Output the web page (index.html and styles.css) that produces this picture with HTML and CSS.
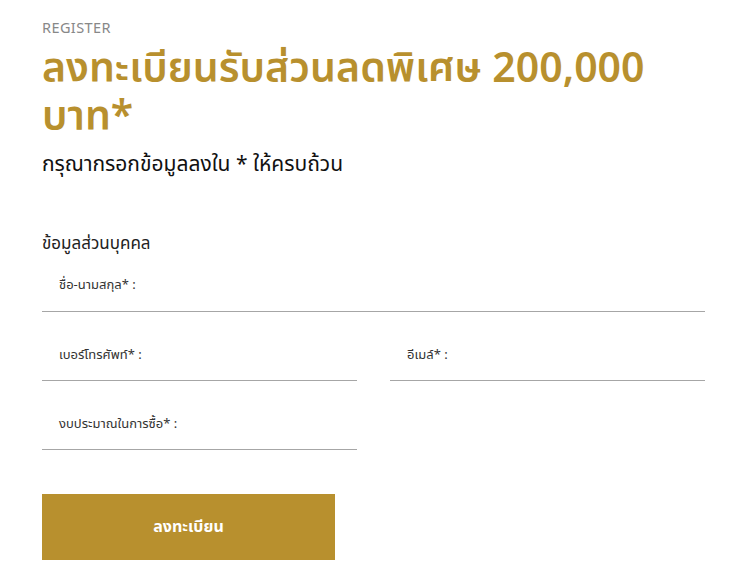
FILE: index.html
```html
<!DOCTYPE html>
<html lang="th">
<head>
<meta charset="utf-8">
<link rel="stylesheet" href="styles.css">
</head>
<body>
<div class="page">
  <div class="eyebrow">REGISTER</div>
  <h1 class="title">ลงทะเบียนรับส่วนลดพิเศษ 200,000 บาท*</h1>
  <p class="subtitle">กรุณากรอกข้อมูลลงใน * ให้ครบถ้วน</p>
  <h2 class="section">ข้อมูลส่วนบุคคล</h2>
  <form class="form">
    <div class="field first"><label>ชื่อ-นามสกุล* :</label></div>
    <div class="row">
      <div class="field"><label>เบอร์โทรศัพท์* :</label></div>
      <div class="field"><label>อีเมล์* :</label></div>
      <div class="field"><label>งบประมาณในการซื้อ* :</label></div>
    </div>
    <button type="button" class="btn">ลงทะเบียน</button>
  </form>
</div>
</body>
</html>
```
FILE: styles.css
```css
* { box-sizing: border-box; }
body {
  margin: 0;
  background: #fff;
  font-family: "Noto Sans", "Noto Sans Thai", "DejaVu Sans", sans-serif;
}
.page {
  padding: 17px 41px 0 42px;
}
.eyebrow {
  font-size: 14.5px;
  color: #888;
  line-height: 20px;
  letter-spacing: 0.4px;
}
.title {
  margin: 5px 0 0;
  font-size: 41px;
  line-height: 48px;
  font-weight: 600;
  color: #b8902e;
}
.subtitle {
  margin: 10px 0 0;
  font-size: 21px;
  line-height: 30px;
  color: #111;
}
.section {
  margin: 53px 0 0;
  font-size: 17px;
  font-weight: 400;
  line-height: 24px;
  color: #222;
}
.form {
  display: flex;
  flex-direction: column;
  align-items: flex-start;
}
.row {
  width: 100%;
  display: grid;
  grid-template-columns: 1fr 1fr;
  column-gap: 33px;
}
.field {
  width: 100%;
  height: 69px;
  border-bottom: 1px solid #a6a6a6;
  padding: 34px 17px 0;
}
.field.first {
  height: 57px;
  padding-top: 21px;
}
.field label {
  display: block;
  font-size: 13px;
  line-height: 16px;
  color: #333;
}
.btn {
  margin-top: 44px;
  width: 293px;
  height: 66px;
  border: none;
  background: #b8902e;
  color: #fff;
  font-family: inherit;
  font-size: 16px;
  font-weight: 700;
}
```
